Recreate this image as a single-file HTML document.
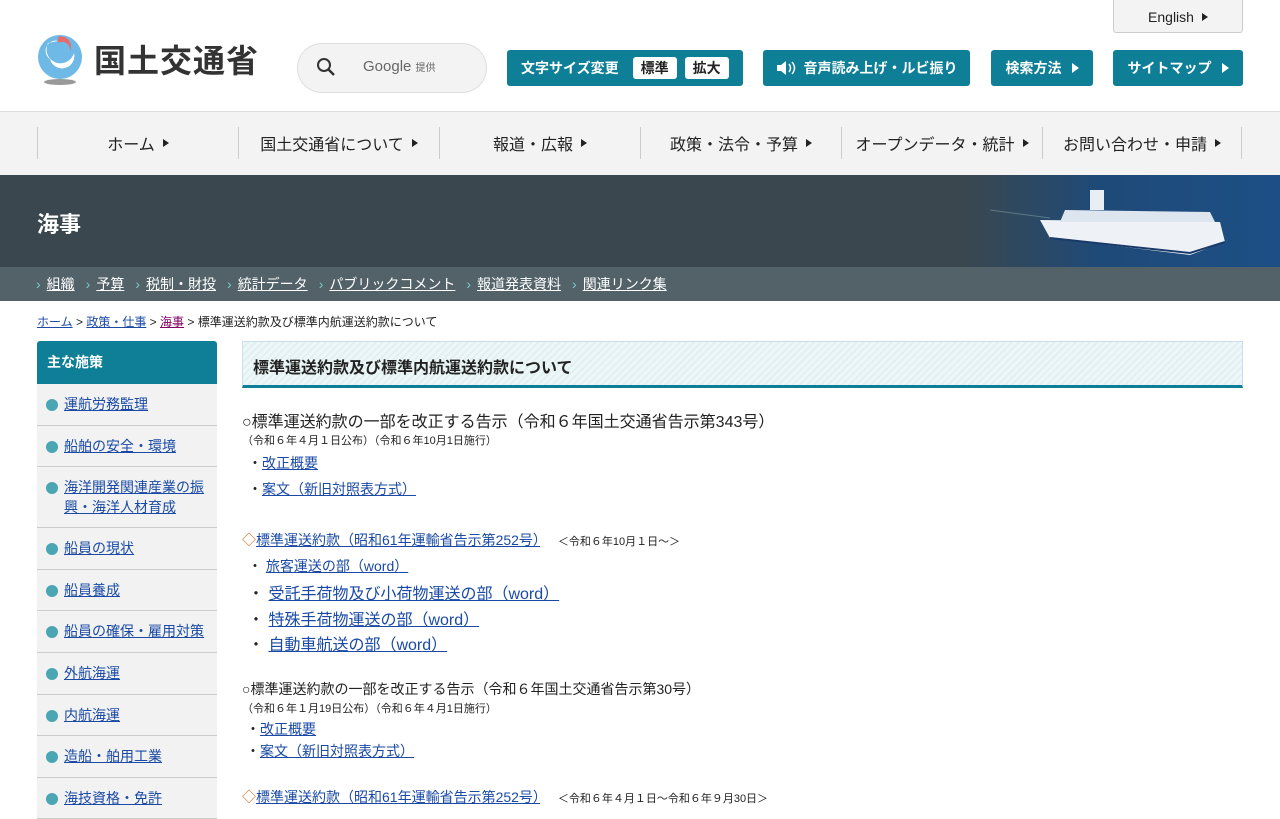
<!DOCTYPE html><html><head><meta charset="utf-8"><style>
*{margin:0;padding:0;box-sizing:border-box}
body{width:1280px;height:800px;overflow:hidden;background:#fff;font-family:"Liberation Sans","Noto Sans CJK JP",sans-serif;color:#222;position:relative}
.a{position:absolute}
.btn{position:absolute;top:50px;height:36px;background:#0e7f96;color:#fff;border-radius:3px;font-size:14px;font-weight:bold;display:flex;align-items:center;justify-content:center}
.tri{display:inline-block;width:0;height:0;border-left:7px solid currentColor;border-top:5px solid transparent;border-bottom:5px solid transparent;margin-left:10px}
.nav{position:absolute;top:111px;left:0;width:1280px;height:64px;background:#f3f3f3;border-top:1px solid #ddd}
.nav div{position:absolute;top:15px;height:32px;border-left:1px solid #ccc;font-size:16px;display:flex;align-items:center;justify-content:center;color:#222}
.nav .tri{border-left-width:6px;border-top-width:4px;border-bottom-width:4px;margin-left:8px}
a{color:#1a4aa5;text-decoration:underline}
.sub{position:absolute;top:267px;left:0;width:1280px;height:34px;background:#536168;font-size:14px;color:#fff;padding-left:36px;display:flex;align-items:center}
.sub span{margin-right:11px}.sub span:before{content:"›";color:#7cc;margin-right:6px}
.sub a{color:#fff}
.side{position:absolute;left:37px;top:341px;width:180px}
.side .h{background:#0e7f96;color:#fff;font-weight:bold;font-size:14px;height:43px;line-height:43px;padding-left:10px;border-radius:3px 3px 0 0}
.side .i{background:#f2f2f2;border-bottom:1px solid #ccc;font-size:14px;padding:10px 8px 10px 27px;position:relative;line-height:20px;height:41.6px}
.side .i.t{height:61px}
.side .i:before{content:"";position:absolute;left:9px;top:15px;width:12px;height:12px;border-radius:50%;background:#4aa6b3}
.c{position:absolute;left:242px;font-size:14px;white-space:nowrap}
.s{font-size:11px}
.dm{color:#d2691e}
</style></head><body>
<svg class="a" style="left:36px;top:33px" width="50" height="54" viewBox="0 0 50 54"><circle cx="24" cy="24" r="22" fill="#6fb9e6"/><path d="M12 10 A14 14 0 1 0 38 20 A12 12 0 0 1 14 26 A10 10 0 0 1 22 8Z" fill="#fff"/><path d="M22 4 A10 10 0 0 1 34 18 A8 8 0 0 0 22 10Z" fill="#e96a6a"/><ellipse cx="24" cy="49" rx="16" ry="3" fill="#999"/></svg>
<div class="a" style="left:94px;top:36px;font-size:32px;font-weight:bold;color:#333;letter-spacing:1px">国土交通省</div>
<div class="a" style="left:297px;top:43px;width:190px;height:50px;border:1px solid #ddd;border-radius:25px;background:#f3f3f3"></div>
<svg class="a" style="left:316px;top:57px" width="20" height="20"><circle cx="8" cy="8" r="6" stroke="#333" stroke-width="2" fill="none"/><line x1="12" y1="12" x2="18" y2="18" stroke="#333" stroke-width="2.5"/></svg>
<div class="a" style="left:363px;top:58px;font-size:15px;color:#666">Google <span style="font-size:10px">提供</span></div>
<div class="btn" style="left:507px;width:236px;justify-content:flex-start;padding-left:14px">文字サイズ変更<span style="background:#fff;color:#222;border-radius:3px;padding:1px 8px;margin-left:14px">標準</span><span style="background:#fff;color:#222;border-radius:3px;padding:1px 8px;margin-left:8px">拡大</span></div>
<div class="btn" style="left:763px;width:207px"><svg width="20" height="16" style="margin-right:8px"><path d="M1 5h4l5-4v14l-5-4H1z" fill="#fff"/><path d="M13 4q3 4 0 8M16 2q5 6 0 12" stroke="#fff" fill="none" stroke-width="1.5"/></svg>音声読み上げ・ルビ振り</div>
<div class="btn" style="left:991px;width:102px">検索方法<span class="tri"></span></div>
<div class="btn" style="left:1113px;width:130px">サイトマップ<span class="tri"></span></div>
<div class="a" style="left:1113px;top:-2px;width:130px;height:35px;background:#f3f3f3;border:1px solid #ccc;border-radius:0 0 3px 3px;font-size:14px;display:flex;align-items:center;justify-content:center;padding-top:3px">English<span class="tri" style="border-left-width:6px;border-top-width:4px;border-bottom-width:4px;margin-left:8px"></span></div>
<div class="nav">
<div style="left:37px;width:201px">ホーム<span class="tri"></span></div>
<div style="left:238px;width:201px">国土交通省について<span class="tri"></span></div>
<div style="left:439px;width:201px">報道・広報<span class="tri"></span></div>
<div style="left:640px;width:201px">政策・法令・予算<span class="tri"></span></div>
<div style="left:841px;width:201px">オープンデータ・統計<span class="tri"></span></div>
<div style="left:1042px;width:200px;border-right:1px solid #ccc">お問い合わせ・申請<span class="tri"></span></div>
</div>
<div class="a" style="left:0;top:175px;width:1280px;height:92px;background:linear-gradient(90deg,#3b474e 0,#3b474e 960px,#1e4a78 1100px,#1d4f86 1280px)"></div>
<svg class="a" style="left:990px;top:180px" width="290" height="87"><path d="M0 30 L60 38" stroke="#8aa" stroke-width="1" opacity=".5"/><path d="M50 40 L230 42 L235 62 L200 75 L60 58 Z" fill="#eef2f6"/><path d="M75 30 L220 32 L225 42 L70 42Z" fill="#dde5ee"/><rect x="100" y="10" width="14" height="20" fill="#e8eef4"/><path d="M60 58 L200 73 L235 62" stroke="#1a3a6a" stroke-width="2" fill="none"/></svg>
<div class="a" style="left:37px;top:207px;color:#fff;font-size:22px;font-weight:bold">海事</div>
<div class="sub"><span><a>組織</a></span><span><a>予算</a></span><span><a>税制・財投</a></span><span><a>統計データ</a></span><span><a>パブリックコメント</a></span><span><a>報道発表資料</a></span><span><a>関連リンク集</a></span></div>
<div class="a" style="left:37px;top:313px;font-size:12px"><a>ホーム</a> &gt; <a>政策・仕事</a> &gt; <a style="color:#800060">海事</a> &gt; 標準運送約款及び標準内航運送約款について</div>
<div class="side"><div class="h">主な施策</div>
<div class="i"><a>運航労務監理</a></div><div class="i"><a>船舶の安全・環境</a></div><div class="i t"><a>海洋開発関連産業の振興・海洋人材育成</a></div><div class="i"><a>船員の現状</a></div><div class="i"><a>船員養成</a></div><div class="i"><a>船員の確保・雇用対策</a></div><div class="i"><a>外航海運</a></div><div class="i"><a>内航海運</a></div><div class="i"><a>造船・舶用工業</a></div><div class="i"><a>海技資格・免許</a></div></div>
<div class="a" style="left:242px;top:341px;width:1001px;height:47px;border:1px solid #cde;border-bottom:3px solid #0e7f96;background:repeating-linear-gradient(135deg,#eef7f8 0 3px,#e2f0f2 3px 5px);font-size:16px;font-weight:bold;padding:12px 0 0 10px">標準運送約款及び標準内航運送約款について</div>
<div class="c" style="top:408px;font-size:16px">○標準運送約款の一部を改正する告示（令和６年国土交通省告示第343号）</div>
<div class="c s" style="top:432px">（令和６年４月１日公布）（令和６年10月1日施行）</div>
<div class="c" style="top:453px;left:248px">・<a>改正概要</a></div>
<div class="c" style="top:479px;left:248px">・<a>案文（新旧対照表方式）</a></div>
<div class="c" style="top:530px"><span class="dm">◇</span><a>標準運送約款（昭和61年運輸省告示第252号）</a>　 <span class="s">＜令和６年10月１日～＞</span></div>
<div class="c" style="top:556px;left:248px">・ <a>旅客運送の部（word）</a></div>
<div class="c" style="top:580px;left:248px;font-size:16px">・ <a>受託手荷物及び小荷物運送の部（word）</a></div>
<div class="c" style="top:606px;left:248px;font-size:16px">・ <a>特殊手荷物運送の部（word）</a></div>
<div class="c" style="top:631px;left:248px;font-size:16px">・ <a>自動車航送の部（word）</a></div>
<div class="c" style="top:679px">○標準運送約款の一部を改正する告示（令和６年国土交通省告示第30号）</div>
<div class="c s" style="top:700px">（令和６年１月19日公布）（令和６年４月1日施行）</div>
<div class="c" style="top:719px;left:246px">・<a>改正概要</a></div>
<div class="c" style="top:741px;left:246px">・<a>案文（新旧対照表方式）</a></div>
<div class="c" style="top:787px"><span class="dm">◇</span><a>標準運送約款（昭和61年運輸省告示第252号）</a>　 <span class="s">＜令和６年４月１日～令和６年９月30日＞</span></div>
</body></html>
